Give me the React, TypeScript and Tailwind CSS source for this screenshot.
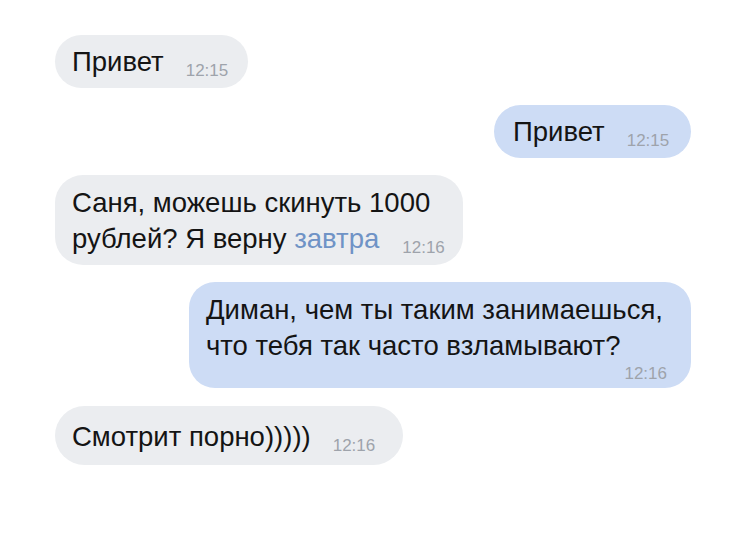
import React from 'react'

const Time: React.FC<{ value: string }> = ({ value }) => (
  <span className="inline-block align-[-5px] ml-[22px] text-[17px] leading-none text-[#9ea3ab]">{value}</span>
)

const App: React.FC = () => {
  return (
    <div
      className="w-[740px] h-[540px] bg-white flex flex-col gap-[17px] pt-[35px] pl-[55px] pr-[49px] text-[#141414] text-[27.5px] leading-[36px]"
      style={{ fontFamily: '"Liberation Sans", Arial, sans-serif' }}
    >
      <div className="self-start w-[193px] rounded-full bg-[#ebedf0] pl-[17px] pt-[9px] pb-[8px] whitespace-nowrap">
        Привет
        <Time value="12:15" />
      </div>

      <div className="self-end w-[197px] rounded-full bg-[#cddcf5] pl-[19px] pt-[9px] pb-[8px] whitespace-nowrap">
        Привет
        <Time value="12:15" />
      </div>

      <div className="self-start w-[408px] rounded-[28px] bg-[#ebedf0] pl-[17px] pt-[10px] pb-[8px] whitespace-nowrap">
        Саня, можешь скинуть 1000
        <br />
        рублей? Я верну <span className="text-[#6f93c6]">завтра</span>
        <span className="inline-block align-[-5px] ml-[23px] text-[17px] leading-none text-[#9ea3ab]">12:16</span>
      </div>

      <div className="self-end w-[502px] rounded-[26px] bg-[#cddcf5] pl-[17px] pr-[24px] pt-[10px] pb-[4px] whitespace-nowrap">
        Диман, чем ты таким занимаешься,
        <br />
        что тебя так часто взламывают?
        <div className="text-right text-[17px] leading-[20px] text-[#9ea3ab]">12:16</div>
      </div>

      <div className="self-start w-[348px] rounded-full bg-[#ebedf0] pl-[17px] pt-[13px] pb-[10px] mt-px whitespace-nowrap">
        Смотрит порно)))))
        <Time value="12:16" />
      </div>
    </div>
  )
}

export default App
